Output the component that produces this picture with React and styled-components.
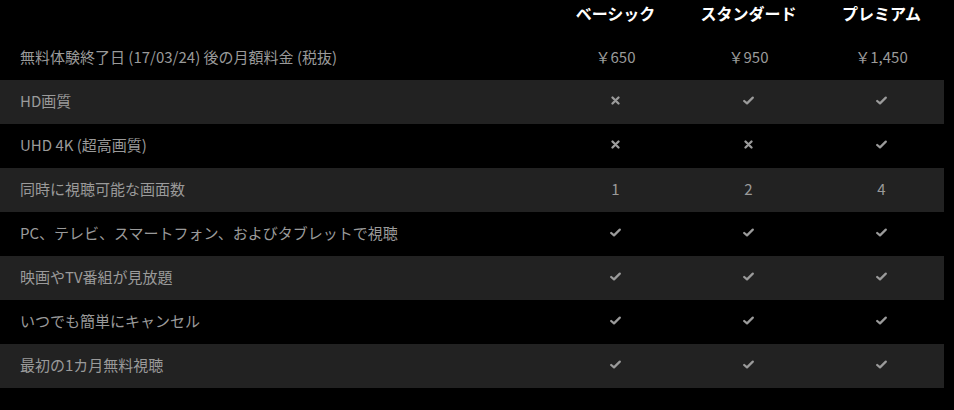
import React from 'react';
import styled, { createGlobalStyle } from 'styled-components';

const GlobalStyle = createGlobalStyle`
  html, body {
    margin: 0;
    padding: 0;
    background: #000;
  }
  body {
    font-family: "Noto Sans CJK JP", "Liberation Sans", sans-serif;
  }
`;

const Table = styled.div`
  width: 944px;
`;

const Row = styled.div`
  display: grid;
  grid-template-columns: 549px 133px 133px 133px;
  height: ${(p) => (p.$head ? 36 : 44)}px;
  align-items: center;
  background: ${(p) => (p.$shade ? '#222222' : '#000000')};
`;

const Label = styled.div`
  padding-left: 20px;
  padding-bottom: 3px;
  font-size: 15px;
  line-height: 20px;
  color: #9a9a9a;
  white-space: nowrap;
`;

const PlanName = styled.div`
  text-align: center;
  font-size: 16px;
  font-weight: 700;
  line-height: 20px;
  color: #fff;
  padding-bottom: 10px;
`;

const Cell = styled.div`
  display: flex;
  justify-content: center;
  align-items: center;
  font-size: 15px;
  line-height: 20px;
  color: #9a9a9a;
  padding-bottom: ${(p) => (p.$icon ? 3 : 3)}px;
`;

const Check = () => (
  <svg width="11" height="9" viewBox="0 0 11 9">
    <path d="M1.2 5 L4 7.4 L9.8 1.6" fill="none" stroke="#9b9b9b" strokeWidth="2.2" strokeLinecap="round" strokeLinejoin="round" />
  </svg>
);

const Cross = () => (
  <svg width="9" height="9" viewBox="0 0 9 9">
    <path d="M1.5 1.5 L7.5 7.5 M7.5 1.5 L1.5 7.5" fill="none" stroke="#9b9b9b" strokeWidth="2.3" strokeLinecap="round" />
  </svg>
);

const rows = [
  ['無料体験終了日 (17/03/24) 後の月額料金 (税抜)', ['￥650', '￥950', '￥1,450']],
  ['HD画質', [false, true, true]],
  ['UHD 4K (超高画質)', [false, false, true]],
  ['同時に視聴可能な画面数', ['1', '2', '4']],
  ['PC、テレビ、スマートフォン、およびタブレットで視聴', [true, true, true]],
  ['映画やTV番組が見放題', [true, true, true]],
  ['いつでも簡単にキャンセル', [true, true, true]],
  ['最初の1カ月無料視聴', [true, true, true]],
];

const renderValue = (v) => {
  if (v === true) return <Check />;
  if (v === false) return <Cross />;
  return v;
};

const App = () => (
  <>
    <GlobalStyle />
    <Table>
      <Row $head>
        <div />
        <PlanName>ベーシック</PlanName>
        <PlanName>スタンダード</PlanName>
        <PlanName>プレミアム</PlanName>
      </Row>
      {rows.map(([label, values], i) => (
        <Row key={label} $shade={i % 2 === 1}>
          <Label>{label}</Label>
          {values.map((v, j) => (
            <Cell key={j} $icon={typeof v === 'boolean'}>
              {renderValue(v)}
            </Cell>
          ))}
        </Row>
      ))}
    </Table>
  </>
);

export default App;
